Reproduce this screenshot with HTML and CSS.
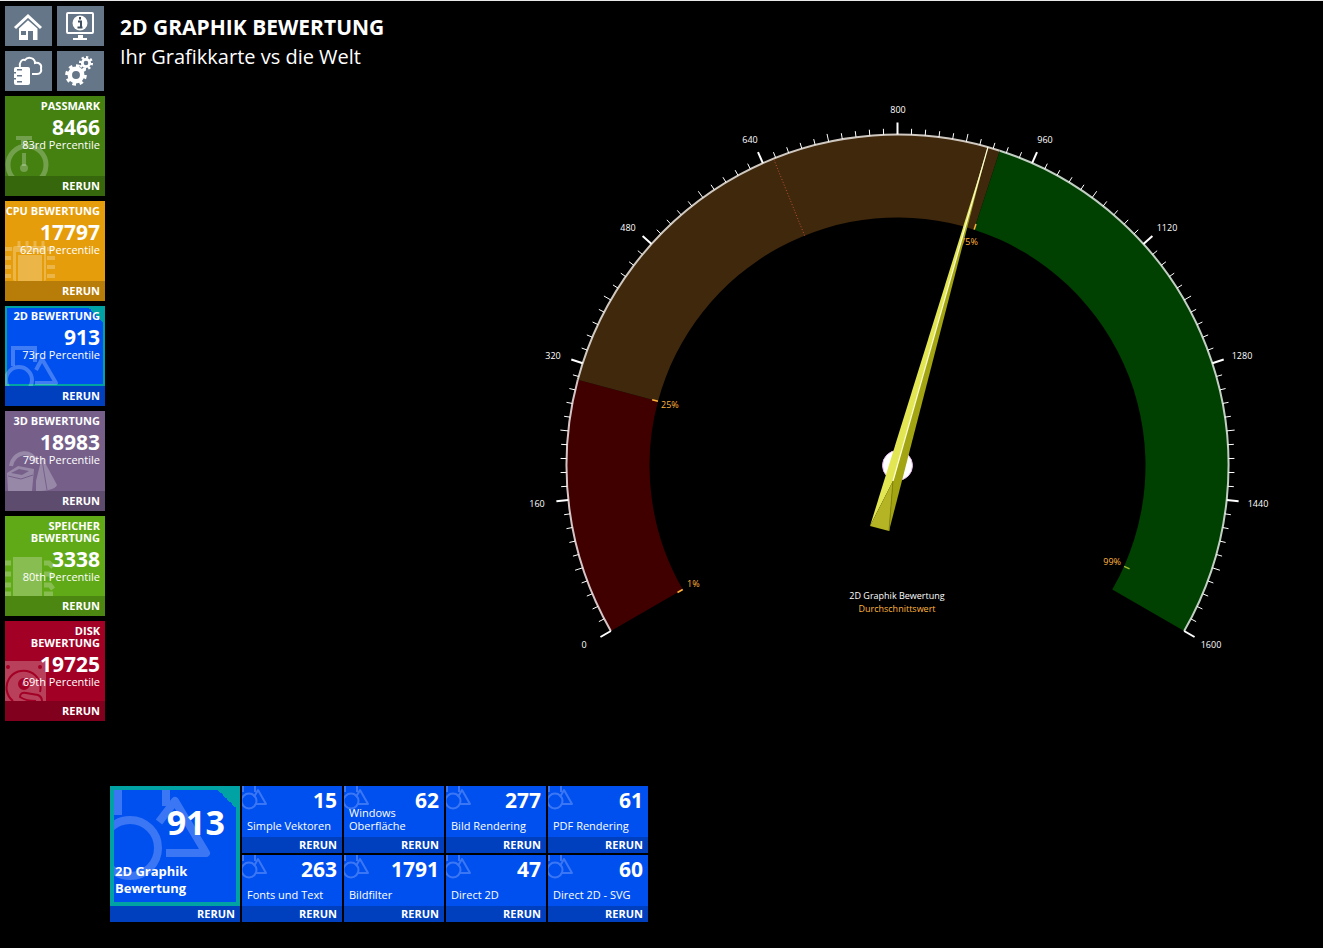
FILE: index.html
```html
<!DOCTYPE html>
<html lang="de">
<head>
<meta charset="utf-8">
<title>2D Graphik Bewertung</title>
<link rel="stylesheet" href="styles.css">
</head>
<body>
<svg class="defs" aria-hidden="true">
  <symbol id="shapes-small" viewBox="0 0 55 40">
    <path d="M8 20V2h22v14" fill="none" stroke="currentColor" stroke-width="4"/>
    <circle cx="14" cy="34" r="13" fill="none" stroke="currentColor" stroke-width="4"/>
    <path d="M31 24L37 13L51 37H30" fill="none" stroke="currentColor" stroke-width="4" stroke-linejoin="round"/>
  </symbol>
  <symbol id="shapes-large" viewBox="0 0 110 110">
    <path d="M4 0V25M52 0V16" fill="none" stroke="currentColor" stroke-width="8"/>
    <circle cx="16" cy="58" r="28" fill="none" stroke="currentColor" stroke-width="8"/>
    <path d="M45 32L61 11L92 63H52" fill="none" stroke="currentColor" stroke-width="8" stroke-linejoin="round"/>
  </symbol>
  <symbol id="shapes-tiny" viewBox="0 0 28 26">
    <path d="M1 0V6M13 0V6" fill="none" stroke="currentColor" stroke-width="2"/>
    <circle cx="7" cy="15" r="7.500" fill="none" stroke="currentColor" stroke-width="2"/>
    <path d="M12 11L16 4L24 18H13" fill="none" stroke="currentColor" stroke-width="2" stroke-linejoin="round"/>
  </symbol>
</svg>

<aside class="sidebar">
  <nav class="tools">
    <button class="tool" aria-label="Start">
      <svg viewBox="0 0 47 40"><path d="M10 22L23 10L36 22" fill="none" stroke="#fff" stroke-width="3"/><path d="M14 22.500L23 14.200L32.500 22.500V34H28V25H23V34H14z" fill="#fff"/><path d="M16 25h5v4h-5z" fill="#647687"/></svg>
    </button>
    <button class="tool" aria-label="Systeminformation">
      <svg viewBox="0 0 47 40"><rect x="10" y="7" width="26" height="20" rx="1" fill="none" stroke="#fff" stroke-width="2"/><circle cx="23" cy="17" r="7.500" fill="#fff"/><path d="M21 15.500h3v6M20.500 21.500h5M23 11v2.400" fill="none" stroke="#40505f" stroke-width="2"/><path d="M21 29h5v3h4v2H16v-2h5z" fill="#fff"/></svg>
    </button>
    <button class="tool" aria-label="Baselines">
      <svg viewBox="0 0 47 40"><path d="M15 16C14 11 17 8 20 9C23 5 30 7 30 12C34 11 37 14 36 17C37 21 35 23 32 23H27" fill="none" stroke="#fff" stroke-width="2"/><rect x="9" y="16" width="16" height="18" rx="2" fill="#fff"/><path d="M12 18.700h5M12 24.700h5M12 30.700h5M9 21.700h2M9 27.700h2" stroke="#647687" stroke-width="1.600"/></svg>
    </button>
    <button class="tool" aria-label="Einstellungen">
      <svg viewBox="0 0 47 40"><g fill="none" stroke="#fff"><circle cx="19" cy="24" r="6.200" stroke-width="4.500"/><circle cx="19" cy="24" r="9.300" stroke-width="3" pathLength="16" stroke-dasharray="1 1"/><circle cx="29" cy="12" r="3.700" stroke-width="2.800"/><circle cx="29" cy="12" r="5.800" stroke-width="2.500" pathLength="16" stroke-dasharray="1 1"/></g></svg>
    </button>
  </nav>

  <section class="score passmark">
    <div class="score-body">
      <svg class="score-icon" viewBox="0 0 55 40"><g fill="none" stroke="currentColor"><circle cx="22" cy="29" r="19" stroke-width="5"/><path d="M19 17V30" stroke-width="4"/><path d="M11 1H27M19 4V9" stroke-width="6"/></g><circle cx="19" cy="32" r="4" fill="currentColor"/></svg>
      <h2>PASSMARK</h2><strong>8466</strong><span>83rd Percentile</span>
    </div>
    <button class="rerun">RERUN</button>
  </section>

  <section class="score cpu">
    <div class="score-body">
      <svg class="score-icon" viewBox="0 0 55 40"><rect x="8" y="5" width="33" height="35" rx="2" fill="currentColor"/><path d="M11 11h28v3H11zM11 14h2v26h-2zM37 14h2v26h-2z" fill="#e59d0b"/><g stroke="currentColor" stroke-width="4"><path d="M14 0V6M22 0V6M30 0V6M38 0V6" stroke-width="3"/><path d="M0 8H5V6M0 17H6M0 26H6M0 35H6M42 8H49M42 17H50M42 26H50M42 35H50" fill="none"/></g></svg>
      <h2>CPU BEWERTUNG</h2><strong>17797</strong><span>62nd Percentile</span>
    </div>
    <button class="rerun">RERUN</button>
  </section>

  <section class="score graphics2d">
    <div class="score-body active">
      <svg class="score-icon"><use href="#shapes-small"/></svg>
      <h2>2D BEWERTUNG</h2><strong>913</strong><span>73rd Percentile</span>
    </div>
    <button class="rerun">RERUN</button>
  </section>

  <section class="score graphics3d">
    <div class="score-body">
      <svg class="score-icon" viewBox="0 0 55 40"><path d="M6 15C9 -1 28 -2 31 12" fill="none" stroke="currentColor" stroke-width="4"/><path d="M2 22L13 15L29 18L27 40H3z" fill="currentColor"/><path d="M6 22L14 18L24 20L17 24z" fill="#76608a"/><path d="M3 25L16 28L28 24" fill="none" stroke="#76608a" stroke-width="1"/><path d="M37 6L52 34Q49 40 31 40V30z" fill="currentColor"/><path d="M37 9L42 39" stroke="#76608a" stroke-width="1"/></svg>
      <h2>3D BEWERTUNG</h2><strong>18983</strong><span>79th Percentile</span>
    </div>
    <button class="rerun">RERUN</button>
  </section>

  <section class="score memory">
    <div class="score-body">
      <svg class="score-icon" viewBox="0 0 55 40"><path d="M8 1H37V40H8z" fill="currentColor"/><path d="M0 7H6M0 18H6M0 29H6M0 38H6M39 7H44L48 11M39 18H45L48 22M39 29H45L48 33M39 38H48" fill="none" stroke="currentColor" stroke-width="5"/></svg>
      <h2>SPEICHER BEWERTUNG</h2><strong>3338</strong><span>80th Percentile</span>
    </div>
    <button class="rerun">RERUN</button>
  </section>

  <section class="score disk">
    <div class="score-body">
      <svg class="score-icon" viewBox="0 0 55 40"><path d="M0 0H41V40H0z" fill="currentColor"/><g fill="none" stroke="#a20025"><path d="M8 40A17 17 0 1 1 35 31" stroke-width="2"/><circle cx="19" cy="23" r="4" stroke-width="4"/><path d="M31 40Q21 40 15 36Q15 31 21 32L33 34Q37 36 37 40" stroke-width="2"/></g><g fill="#a20025"><circle cx="3" cy="6" r="2"/><circle cx="35" cy="6" r="2"/></g></svg>
      <h2>DISK BEWERTUNG</h2><strong>19725</strong><span>69th Percentile</span>
    </div>
    <button class="rerun">RERUN</button>
  </section>
</aside>

<main class="main">
  <header class="heading">
    <h1>2D GRAPHIK BEWERTUNG</h1>
    <p>Ihr Grafikkarte vs die Welt</p>
  </header>

  <div class="gauge">
    <svg viewBox="0 0 750 580" role="img" aria-label="2D Graphik Bewertung 913">
      <g id="zones"></g>
      <g id="ticks"></g>
      <g id="labels" class="scale-label"></g>
      <g class="percent-label">
        <text x="164" y="497">1%</text>
        <text x="138" y="318">25%</text>
        <text x="446" y="155" text-anchor="middle">75%</text>
        <text x="598" y="475" text-anchor="end">99%</text>
      </g>
      <circle cx="374.500" cy="375.500" r="15" fill="#fff" stroke="#e5b8ed"/>
      <path d="M465 57L347 436L370 391z" fill="#e3e653"/>
      <path d="M465 57L370 391L366 441z" fill="#a3a412"/>
      <path d="M370 391L347 436L366 441z" fill="#b4b424"/>
      <path d="M465 57L370 391" stroke="#ffffd9" stroke-width="1.200"/>
      <path d="M370 391L366 441" stroke="#858510" stroke-width="1"/>
      <text class="caption" x="374" y="509">2D Graphik Bewertung</text>
      <text class="caption average" x="374" y="522">Durchschnittswert</text>
    </svg>
  </div>

  <div class="results">
    <section class="total">
      <div class="total-body">
        <svg class="total-icon"><use href="#shapes-large"/></svg>
        <strong>913</strong><h2>2D Graphik Bewertung</h2>
      </div>
      <button class="rerun">RERUN</button>
    </section>
    <section class="test"><div class="test-body"><svg class="test-icon"><use href="#shapes-tiny"/></svg><strong>15</strong><span>Simple Vektoren</span></div><button class="rerun">RERUN</button></section>
    <section class="test"><div class="test-body"><svg class="test-icon"><use href="#shapes-tiny"/></svg><strong>62</strong><span>Windows Oberfläche</span></div><button class="rerun">RERUN</button></section>
    <section class="test"><div class="test-body"><svg class="test-icon"><use href="#shapes-tiny"/></svg><strong>277</strong><span>Bild Rendering</span></div><button class="rerun">RERUN</button></section>
    <section class="test"><div class="test-body"><svg class="test-icon"><use href="#shapes-tiny"/></svg><strong>61</strong><span>PDF Rendering</span></div><button class="rerun">RERUN</button></section>
    <section class="test"><div class="test-body"><svg class="test-icon"><use href="#shapes-tiny"/></svg><strong>263</strong><span>Fonts und Text</span></div><button class="rerun">RERUN</button></section>
    <section class="test"><div class="test-body"><svg class="test-icon"><use href="#shapes-tiny"/></svg><strong>1791</strong><span>Bildfilter</span></div><button class="rerun">RERUN</button></section>
    <section class="test"><div class="test-body"><svg class="test-icon"><use href="#shapes-tiny"/></svg><strong>47</strong><span>Direct 2D</span></div><button class="rerun">RERUN</button></section>
    <section class="test"><div class="test-body"><svg class="test-icon"><use href="#shapes-tiny"/></svg><strong>60</strong><span>Direct 2D - SVG</span></div><button class="rerun">RERUN</button></section>
  </div>
</main>
<script src="gauge.js"></script>
</body>
</html>
```

FILE: styles.css
```css
* { box-sizing: border-box; }

body {
  margin: 0;
  min-height: 100vh;
  display: grid;
  grid-template-columns: 110px 1fr;
  background: #000;
  border-top: 1px solid #e8e8e8;
  color: #fff;
  font-family: "Open Sans", "Noto Sans", sans-serif;
}

h1, h2, p { margin: 0; }
.defs { position: absolute; width: 0; height: 0; }

button {
  margin: 0;
  padding: 0;
  border: 0;
  color: #fff;
  font-family: inherit;
  cursor: pointer;
}

/* Sidebar */
.sidebar {
  display: flex;
  flex-direction: column;
  gap: 5px;
  padding: 5px;
}
.tools {
  display: grid;
  grid-template-columns: 47px 47px;
  gap: 5px;
}
.tool { height: 40px; background: #647687; }
.tool svg { display: block; width: 47px; height: 40px; }

.score { display: flex; flex-direction: column; min-height: 100px; }
.score-body {
  position: relative;
  flex: 1;
  display: flex;
  flex-direction: column;
  align-items: flex-end;
  padding: 4px 5px 0 0;
  overflow: hidden;
  text-align: right;
}
.score-icon {
  position: absolute;
  left: 0;
  bottom: 0;
  width: 55px;
  height: 40px;
  color: rgba(255, 255, 255, 0.25);
}
.score h2, .score strong, .score span { position: relative; z-index: 1; }
.score h2 { font-size: 11px; line-height: 12px; font-weight: 700; }
.score strong { font-size: 21px; line-height: 23px; margin-top: 4px; font-weight: 700; }
.score span { font-size: 11px; line-height: 12px; }

.rerun {
  height: 20px;
  padding-right: 5px;
  background: rgba(0, 0, 0, 0.2);
  font-size: 11px;
  line-height: 16px;
  font-weight: 700;
  text-align: right;
}

.passmark { background: #448110; }
.cpu { background: #e59d0b; }
.graphics2d { background: #0050ef; }
.graphics3d { background: #76608a; }
.memory { background: #60a917; }
.disk { background: #a20025; }

.active::before, .total-body::before {
  content: "";
  position: absolute;
  inset: 0;
  border: 2px solid #00a2a4;
  background: linear-gradient(45deg, transparent 50%, #00a2a4 50%) top right / 14px 14px no-repeat;
}

/* Main */
.main {
  display: flex;
  flex-direction: column;
  padding-bottom: 26px;
  min-width: 0;
}
.heading { padding: 11px 10px 0; height: 89px; }
h1 { font-size: 21px; line-height: 30px; font-weight: 700; }
.heading p { font-size: 20px; line-height: 30px; }

.gauge { padding: 0 50px 0 413px; }
.gauge svg { display: block; width: 100%; }
.scale-label, .percent-label, .caption { font-size: 9px; }
.scale-label { fill: #fff; text-anchor: middle; }
.percent-label { fill: #ffb43c; }
.caption { fill: #fff; text-anchor: middle; }
.average { fill: #ffb43c; }

.results {
  display: grid;
  grid-template-columns: 130px repeat(4, 100px);
  grid-template-rows: 67px 67px;
  gap: 2px;
  margin-top: auto;
}
.results .rerun { height: 16px; }
.total, .test { display: flex; flex-direction: column; background: #0050ef; }
.total { grid-row: span 2; }

.total-body {
  position: relative;
  flex: 1;
  display: flex;
  flex-direction: column;
  justify-content: space-between;
  padding: 15px 5px 9px;
}
.total-body::before { border-width: 4px; background-size: 18px 18px; }
.total-icon {
  position: absolute;
  left: 4px;
  top: 4px;
  width: 110px;
  height: 110px;
  color: #3b77f4;
}
.total strong { position: relative; padding-right: 10px; font-size: 34px; line-height: 42px; text-align: right; }
.total h2 { position: relative; font-size: 13px; line-height: 17px; }

.test-body {
  position: relative;
  flex: 1;
  display: flex;
  flex-direction: column;
  justify-content: space-between;
  padding: 2px 5px 5px;
}
.test-icon {
  position: absolute;
  left: 0;
  top: 0;
  width: 28px;
  height: 26px;
  color: #3b77f4;
}
.test strong { height: 18px; font-size: 21px; line-height: 24px; text-align: right; }
.test span { position: relative; font-size: 11px; line-height: 13px; }
```

FILE: gauge.js
```js
const NS = "http://www.w3.org/2000/svg";
const CX = 374.5, CY = 375.5, OUTER = 331, INNER = 248, MAX = 1600;

// Angle is measured clockwise from the top, in degrees.
function point(angle, radius) {
  const a = angle * Math.PI / 180;
  return [CX + radius * Math.sin(a), CY - radius * Math.cos(a)];
}
function add(parent, name, attrs, text) {
  const el = document.createElementNS(NS, name);
  for (const key in attrs) el.setAttribute(key, attrs[key]);
  if (text !== undefined) el.textContent = text;
  document.getElementById(parent).appendChild(el);
}
function line(angle, from, to, stroke, width, dash) {
  const a = point(angle, from), b = point(angle, to);
  add("ticks", "line", { x1: a[0], y1: a[1], x2: b[0], y2: b[1], stroke, "stroke-width": width, "stroke-dasharray": dash || "none" });
}
function arc(from, to, radius, sweep) {
  const large = Math.abs(to - from) > 180 ? 1 : 0;
  return `A${radius} ${radius} 0 ${large} ${sweep} ${point(to, radius)}`;
}

const zones = [[-120, -75, "#400000", "#d5c4c6"], [-75, 18, "#40280c", "#cfc8c0"], [18, 120, "#004000", "#c0cfc2"]];
for (const [from, to, fill, rim] of zones) {
  add("zones", "path", { fill, d: `M${point(from, OUTER)}${arc(from, to, OUTER, 1)}L${point(to, INNER)}${arc(to, from, INNER, 0)}Z` });
  add("zones", "path", { fill: "none", stroke: rim, "stroke-width": 2, d: `M${point(from, OUTER)}${arc(from, to, OUTER, 1)}` });
}

for (let i = 0; i <= 100; i++) {
  const angle = -120 + i * 2.4;
  if (i % 10 === 0) {
    line(angle, OUTER, OUTER + 12, "#fff", 2);
    const x = point(angle, 362)[0], y = point(angle, 357)[1];
    add("labels", "text", { x: Math.round(x), y: Math.round(y + 4) }, i * MAX / 100);
  } else {
    line(angle, OUTER, OUTER + (i % 5 ? 6 : 8), "#fff", 1);
  }
}
line(-22, INNER, OUTER, "#c05030", 1, "1 2");
for (const angle of [-120, -75, 18, 114]) line(angle, INNER, INNER + 6, angle === 114 ? "#a0b830" : "#ffb43c", 1.5);
```
